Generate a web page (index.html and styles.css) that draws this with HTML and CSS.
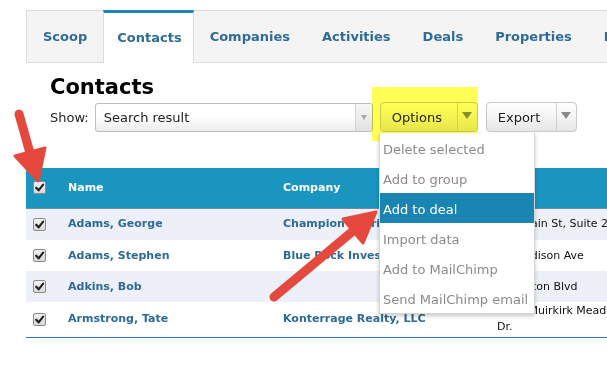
FILE: index.html
```html
<!DOCTYPE html>
<html>
<head>
<meta charset="utf-8">
<link rel="stylesheet" href="styles.css">
</head>
<body>
<div class="page">
  <nav class="tabs">
    <span class="tab">Scoop</span>
    <span class="tab active">Contacts</span>
    <span class="tab">Companies</span>
    <span class="tab">Activities</span>
    <span class="tab">Deals</span>
    <span class="tab">Properties</span>
    <span class="tab">Lists</span>
  </nav>

  <div class="content">
    <h1>Contacts</h1>
    <div class="toolbar">
      <span class="show-label">Show:</span>
      <div class="select">
        <span class="select-text">Search result</span>
        <span class="select-arrow"><span class="tri tri-small"></span></span>
      </div>
      <div class="btn btn-options">
        <span class="btn-text">Options</span>
        <span class="btn-arrow"><span class="tri"></span></span>
      </div>
      <div class="btn btn-export">
        <span class="btn-text">Export</span>
        <span class="btn-arrow"><span class="tri"></span></span>
      </div>
    </div>
  </div>

  <table class="grid">
    <colgroup>
      <col class="c-check"><col class="c-name"><col class="c-company"><col class="c-address">
    </colgroup>
    <thead>
      <tr>
        <th class="cell-check"><span class="cb"><svg viewBox="0 0 10 10"><path d="M2 5.2 L4.2 7.6 L8.3 2.4" /></svg></span></th>
        <th>Name</th>
        <th>Company</th>
        <th></th>
      </tr>
    </thead>
    <tbody>
      <tr class="alt first">
        <td class="cell-check"><span class="cb"><svg viewBox="0 0 10 10"><path d="M2 5.2 L4.2 7.6 L8.3 2.4" /></svg></span></td>
        <td class="link">Adams, George</td>
        <td class="link">Champion Nutrition</td>
        <td class="addr">100 Main St, Suite 200</td>
      </tr>
      <tr>
        <td class="cell-check"><span class="cb"><svg viewBox="0 0 10 10"><path d="M2 5.2 L4.2 7.6 L8.3 2.4" /></svg></span></td>
        <td class="link">Adams, Stephen</td>
        <td class="link">Blue Rock Investments</td>
        <td class="addr">12 Madison Ave</td>
      </tr>
      <tr class="alt">
        <td class="cell-check"><span class="cb"><svg viewBox="0 0 10 10"><path d="M2 5.2 L4.2 7.6 L8.3 2.4" /></svg></span></td>
        <td class="link">Adkins, Bob</td>
        <td class="link"></td>
        <td class="addr">47 Clifton Blvd</td>
      </tr>
      <tr class="last">
        <td class="cell-check"><span class="cb"><svg viewBox="0 0 10 10"><path d="M2 5.2 L4.2 7.6 L8.3 2.4" /></svg></span></td>
        <td class="link">Armstrong, Tate</td>
        <td class="link">Konterrage Realty, LLC</td>
        <td class="addr"><span class="addr-wrap">6505 Muirkirk Meadows Dr.</span></td>
      </tr>
    </tbody>
  </table>

  <div class="highlight"></div>

  <ul class="menu">
    <li>Delete selected</li>
    <li>Add to group</li>
    <li class="active">Add to deal</li>
    <li>Import data</li>
    <li>Add to MailChimp</li>
    <li>Send MailChimp email</li>
  </ul>

  <svg class="arrows" width="607" height="366" viewBox="0 0 607 366">
    <g class="arrow">
      <line x1="19" y1="114" x2="30" y2="153" />
      <polygon points="38,181 45,148 15,156" />
    </g>
    <g class="arrow">
      <line x1="274" y1="297" x2="353" y2="231" />
      <polygon points="376,212 363,243 343,219" />
    </g>
  </svg>
</div>
</body>
</html>
```

FILE: styles.css
```css
* { box-sizing: border-box; }

html, body {
  margin: 0;
  padding: 0;
  background: #fff;
  overflow: hidden;
  width: 607px;
  height: 366px;
}

body {
  font-family: "DejaVu Sans", Verdana, sans-serif;
  color: #222;
}

.page {
  position: relative;
  width: 720px;
  padding: 10px 0 0 26px;
}

/* Tabs */
.tabs {
  display: flex;
  height: 53px;
  background: #f4f4f4;
  border: 1px solid #dcdcdc;
  border-right: none;
}

.tab {
  display: flex;
  align-items: center;
  padding: 0 15px;
  border-left: 1px solid transparent;
  border-right: 1px solid transparent;
  font-size: 13px;
  font-weight: bold;
  color: #2e6b97;
  white-space: nowrap;
}

.tab.active {
  background: #fff;
  border-left-color: #dcdcdc;
  border-right-color: #dcdcdc;
  border-top: 3px solid #1a86b6;
  margin-top: -1px;
  margin-bottom: -1px;
  padding-bottom: 1px;
  padding-left: 13px;
  padding-right: 11px;
}

/* Heading + toolbar */
.content {
  padding: 0 24px;
}

h1 {
  margin: 12px 0 0;
  font-size: 21px;
  line-height: 25px;
  font-weight: bold;
  color: #000;
}

.toolbar {
  display: flex;
  align-items: center;
  margin-top: 2px;
  height: 30px;
}

.show-label {
  font-size: 13px;
  margin-right: 6px;
  color: #222;
}

.select {
  display: flex;
  width: 278px;
  height: 29px;
  border: 1px solid #bdbdbd;
  border-radius: 3px;
  background: linear-gradient(#ffffff, #ffffff 45%, #ececec);
}

.select-text {
  flex: 1;
  display: flex;
  align-items: center;
  padding-left: 8px;
  font-size: 13px;
  color: #222;
}

.select-arrow {
  width: 17px;
  border-left: 1px solid #d4d4d4;
  display: flex;
  align-items: center;
  justify-content: center;
  background: linear-gradient(#f6f6f6, #e2e2e2);
  border-radius: 0 3px 3px 0;
}

.tri {
  width: 0;
  height: 0;
  border-left: 5px solid transparent;
  border-right: 5px solid transparent;
  border-top: 7px solid #8a8a8a;
}

.tri-small {
  border-left-width: 3px;
  border-right-width: 3px;
  border-top: 5px solid #a8a8a8;
}

.btn {
  display: flex;
  height: 30px;
  border: 1px solid #c9c9c9;
  border-radius: 4px;
  background: linear-gradient(#ffffff, #f4f4f4 50%, #e6e6e6);
}

.btn-text {
  display: flex;
  align-items: center;
  font-size: 13px;
  color: #222;
}

.btn-arrow {
  width: 20px;
  border-left: 1px solid #cfcfcf;
  display: flex;
  align-items: center;
  justify-content: center;
  padding-bottom: 4px;
}

.btn-options {
  margin-left: 7px;
  width: 98px;
}
.btn-options .btn-text { width: 76px; padding-left: 11px; }

.btn-export {
  margin-left: 8px;
  width: 91px;
}
.btn-export .btn-text { width: 69px; padding-left: 11px; }

/* Highlighter annotation */
.highlight {
  position: absolute;
  left: 372px;
  top: 87px;
  width: 106px;
  height: 54px;
  background: #ffff55;
  mix-blend-mode: multiply;
  z-index: 2;
}

/* Table */
.grid {
  margin-top: 36px;
  width: 675px;
  table-layout: fixed;
  border-collapse: collapse;
  font-size: 11px;
}

.c-check { width: 34px; }
.c-name { width: 215px; }
.c-company { width: 214px; }
.c-address { width: 212px; }

.grid th {
  height: 40px;
  background: #1995bf;
  color: #fff;
  font-weight: bold;
  text-align: left;
  padding: 0 8px;
  border-bottom: 1px solid #7a8a96;
}

.grid td {
  height: 31px;
  padding: 0 8px;
  line-height: 16px;
  vertical-align: middle;
  white-space: nowrap;
  overflow: hidden;
}

.grid tr.first td { height: 32px; }

.grid tr.alt td { background: #edf0f8; }

.grid tr.last td {
  height: 35px;
  padding-top: 1px;
  padding-bottom: 1px;
  border-bottom: 1px solid #2b72bf;
}

.grid .cell-check { padding: 0 0 0 7px; }

.link {
  font-weight: bold;
  color: #2d6a97;
}

.addr {
  color: #111;
}

.addr-wrap {
  display: block;
  width: 140px;
  white-space: normal;
}

.cb {
  display: block;
  width: 13px;
  height: 13px;
  border: 1px solid #8d8d8d;
  border-radius: 2px;
  background: linear-gradient(#f2f2f2, #d9d9d9);
}

.cb svg {
  display: block;
  width: 11px;
  height: 11px;
}

.cb path {
  fill: none;
  stroke: #222;
  stroke-width: 2;
  stroke-linecap: round;
  stroke-linejoin: round;
}

/* Dropdown menu */
.menu {
  position: absolute;
  left: 379px;
  top: 133px;
  width: 156px;
  margin: 0;
  padding: 0;
  list-style: none;
  background: #fff;
  border: 1px solid #d6d6d6;
  border-top: none;
  box-shadow: 0 2px 4px rgba(0, 0, 0, 0.22);
  z-index: 3;
}

.menu li {
  height: 30px;
  line-height: 27px;
  padding: 3px 0 0 3px;
  font-size: 13px;
  color: #8a8a8a;
  white-space: nowrap;
}

.menu li.active {
  background: #1a84b3;
  color: #fff;
}

/* Annotation arrows */
.arrows {
  position: absolute;
  left: 0;
  top: 0;
  z-index: 4;
  pointer-events: none;
}

.arrow line {
  stroke: #e5493d;
  stroke-width: 9;
  stroke-linecap: round;
}

.arrow polygon {
  fill: #e5493d;
  stroke: #e5493d;
  stroke-width: 3;
  stroke-linejoin: round;
}
```
